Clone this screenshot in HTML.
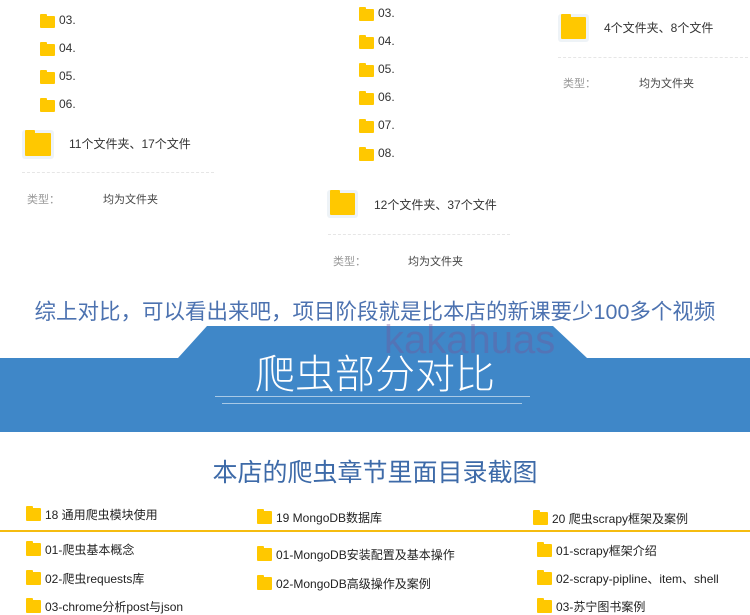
<!DOCTYPE html>
<html><head><meta charset="utf-8"><style>
*{margin:0;padding:0}
body{width:750px;height:613px;background:#fff;position:relative;overflow:hidden;font-family:"Liberation Sans","Noto Sans CJK SC",sans-serif;}
.a{position:absolute;white-space:nowrap}
.f{position:absolute;background:#ffc800;border-radius:1px}
.f:before{content:"";position:absolute;left:0;top:-2px;width:45%;height:3px;background:#ffc800;border-radius:1px 1px 0 0}
.t{font-size:12px;color:#333}
.g{font-size:11px;color:#999}
.dash{position:absolute;border-top:1px dashed #e6e6e6}
.big{position:absolute;background:#ffc800;border-radius:1px;box-shadow:0 0 0 3px #eef3f7}
.big:before{content:"";position:absolute;left:0;top:-3px;width:40%;height:4px;background:#ffc800;border-radius:1px 1px 0 0}
.b{font-size:12px;color:#222}
</style></head><body>
<div class="f" style="left:40px;top:16px;width:15px;height:12px"></div><div class="a t" style="left:59px;top:13px">03.</div>
<div class="f" style="left:40px;top:44px;width:15px;height:12px"></div><div class="a t" style="left:59px;top:41px">04.</div>
<div class="f" style="left:40px;top:72px;width:15px;height:12px"></div><div class="a t" style="left:59px;top:69px">05.</div>
<div class="f" style="left:40px;top:100px;width:15px;height:12px"></div><div class="a t" style="left:59px;top:97px">06.</div>
<div class="big" style="left:25px;top:133px;width:26px;height:23px"></div>
<div class="a t" style="left:69px;top:135px">11个文件夹、17个文件</div>
<div class="dash" style="left:22px;top:172px;width:192px"></div>
<div class="a g" style="left:27px;top:191px">类型：</div><div class="a g" style="left:103px;top:191px;color:#444">均为文件夹</div>
<div class="f" style="left:359px;top:9px;width:15px;height:12px"></div><div class="a t" style="left:378px;top:6px">03.</div>
<div class="f" style="left:359px;top:37px;width:15px;height:12px"></div><div class="a t" style="left:378px;top:34px">04.</div>
<div class="f" style="left:359px;top:65px;width:15px;height:12px"></div><div class="a t" style="left:378px;top:62px">05.</div>
<div class="f" style="left:359px;top:93px;width:15px;height:12px"></div><div class="a t" style="left:378px;top:90px">06.</div>
<div class="f" style="left:359px;top:121px;width:15px;height:12px"></div><div class="a t" style="left:378px;top:118px">07.</div>
<div class="f" style="left:359px;top:149px;width:15px;height:12px"></div><div class="a t" style="left:378px;top:146px">08.</div>
<div class="big" style="left:330px;top:193px;width:25px;height:22px"></div>
<div class="a t" style="left:374px;top:196px">12个文件夹、37个文件</div>
<div class="dash" style="left:328px;top:234px;width:182px"></div>
<div class="a g" style="left:333px;top:253px">类型：</div><div class="a g" style="left:408px;top:253px;color:#444">均为文件夹</div>
<div class="big" style="left:561px;top:17px;width:25px;height:22px"></div>
<div class="a t" style="left:604px;top:19px">4个文件夹、8个文件</div>
<div class="dash" style="left:558px;top:57px;width:190px"></div>
<div class="a g" style="left:563px;top:75px">类型：</div><div class="a g" style="left:639px;top:75px;color:#444">均为文件夹</div>
<div class="a" style="left:0;width:750px;text-align:center;top:295px;font-size:21.5px;color:#4c72b0">综上对比，可以看出来吧，项目阶段就是比本店的新课要少100多个视频</div>
<svg class="a" style="left:0;top:0" width="750" height="613"><polygon points="207,326 553,326 587,358 750,358 750,432 0,432 0,358 178,358" fill="#3f87c8"/></svg>
<div class="a" style="left:384px;top:318px;font-size:40px;color:rgba(120,80,150,.35)">kakahuas</div>
<div class="a" style="left:0;width:750px;text-align:center;top:342px;font-size:40px;color:#fff;font-weight:300">爬虫部分对比</div>
<div class="a" style="left:215px;top:396px;width:315px;height:1px;background:rgba(255,255,255,.55)"></div>
<div class="a" style="left:222px;top:403px;width:300px;height:1px;background:rgba(255,255,255,.55)"></div>
<div class="a" style="left:0;width:750px;text-align:center;top:453px;font-size:25px;color:#3d6aa8">本店的爬虫章节里面目录截图</div>
<div class="f" style="left:26px;top:508px;width:15px;height:13px"></div><div class="a b" style="left:45px;top:506px">18 通用爬虫模块使用</div>
<div class="f" style="left:257px;top:511px;width:15px;height:13px"></div><div class="a b" style="left:276px;top:509px">19 MongoDB数据库</div>
<div class="f" style="left:533px;top:512px;width:15px;height:13px"></div><div class="a b" style="left:552px;top:510px">20 爬虫scrapy框架及案例</div>
<div class="a" style="left:0;top:530px;width:750px;height:2px;background:#f5bc10"></div>
<div class="f" style="left:26px;top:543px;width:15px;height:13px"></div><div class="a b" style="left:45px;top:541px">01-爬虫基本概念</div>
<div class="f" style="left:26px;top:572px;width:15px;height:13px"></div><div class="a b" style="left:45px;top:570px">02-爬虫requests库</div>
<div class="f" style="left:26px;top:600px;width:15px;height:13px"></div><div class="a b" style="left:45px;top:598px">03-chrome分析post与json</div>
<div class="f" style="left:257px;top:548px;width:15px;height:13px"></div><div class="a b" style="left:276px;top:546px">01-MongoDB安装配置及基本操作</div>
<div class="f" style="left:257px;top:577px;width:15px;height:13px"></div><div class="a b" style="left:276px;top:575px">02-MongoDB高级操作及案例</div>
<div class="f" style="left:537px;top:544px;width:15px;height:13px"></div><div class="a b" style="left:556px;top:542px">01-scrapy框架介绍</div>
<div class="f" style="left:537px;top:572px;width:15px;height:13px"></div><div class="a b" style="left:556px;top:570px">02-scrapy-pipline、item、shell</div>
<div class="f" style="left:537px;top:600px;width:15px;height:13px"></div><div class="a b" style="left:556px;top:598px">03-苏宁图书案例</div>
</body></html>
